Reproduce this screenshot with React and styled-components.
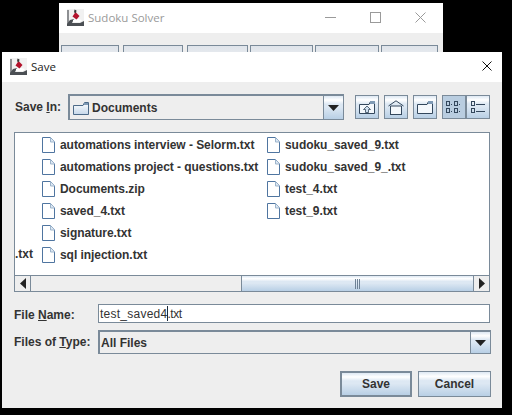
import React from "react";
import styled, { createGlobalStyle } from "styled-components";

const OCEAN = "linear-gradient(#dde8f3, #fff 18%, #dde8f3 36%, #dde8f3 48%, #b8cfe5)";
const LINE = "#7a8a99";

const GlobalStyle = createGlobalStyle`
  html, body { margin: 0; padding: 0; background: #000; }
  body { font-family: "Liberation Sans", Arial, sans-serif; }
`;

const Screen = styled.div`
  width: 512px;
  height: 415px;
  background: #000;
  overflow: hidden;
  padding-top: 3px;
  box-sizing: border-box;
`;

const BackWindow = styled.div`
  width: 384px;
  height: 49px;
  margin-left: 59px;
  background: #eee;
  overflow: hidden;
`;

const TitleBar = styled.div`
  height: 30px;
  background: #fff;
  display: flex;
  align-items: center;
  padding-left: ${(p) => p.$left}px;
  padding-bottom: 2px;
  box-sizing: border-box;
  font: 11.5px "Open Sans", sans-serif;
  color: ${(p) => (p.$dim ? "#9a9a9a" : "#1a1a1a")};
`;

const TitleText = styled.span`
  margin-left: 4px;
  flex: 1;
`;

const WinControls = styled.div`
  display: flex;
  gap: 34px;
  padding-right: 17px;
`;

const TabRow = styled.div`
  display: flex;
  padding: 12px 0 0 2px;
`;

const Tab = styled.div`
  width: ${(p) => p.$w}px;
  margin-right: ${(p) => p.$gap}px;
  height: 12px;
  box-sizing: border-box;
  border: 1px solid ${LINE};
  background: linear-gradient(#dfe4ea, #e8ebef);
`;

const FrontWindow = styled.div`
  width: 500px;
  height: 356px;
  margin-left: 2px;
  background: #eee;
`;

const CloseSlot = styled.div`
  padding-right: 10px;
  display: flex;
`;

const Panel = styled.div`
  padding: 12px 11px 0 12px;
  color: #333;
  font-size: 12px;
  font-weight: bold;
`;

const TopRow = styled.div`
  display: flex;
  align-items: center;
`;

const SaveInLabel = styled.label`
  width: 54px;
  padding-left: 1px;
  box-sizing: border-box;
`;

const Combo = styled.div`
  display: flex;
  box-sizing: border-box;
  height: ${(p) => p.$h}px;
  width: ${(p) => p.$w}px;
  border: 1px solid ${LINE};
  border-width: 2px 1px 1px 2px;
  background: #eee;
  align-items: center;
`;

const ComboValue = styled.div`
  flex: 1;
  display: flex;
  align-items: center;
  gap: 3px;
  padding-left: ${(p) => p.$left}px;
`;

const ComboArrow = styled.div`
  width: 19px;
  height: 100%;
  border-left: 1px solid ${LINE};
  background: ${OCEAN};
  display: flex;
  align-items: center;
  justify-content: center;
`;

const Tools = styled.div`
  display: flex;
  margin-left: 11px;
`;

const ToolButton = styled.div`
  width: 24px;
  height: 24px;
  box-sizing: border-box;
  border: 1px solid ${LINE};
  margin-right: ${(p) => p.$gap || 0}px;
  background: ${(p) => (p.$on ? "#b9cde0" : OCEAN)};
  display: flex;
  align-items: center;
  justify-content: center;
`;

const FileList = styled.div`
  margin: 12px 1px 0 0;
  height: 160px;
  box-sizing: border-box;
  border: 1px solid ${LINE};
  background: #fff;
  display: flex;
  flex-direction: column;
`;

const Columns = styled.div`
  flex: 1;
  display: flex;
  padding-top: 1px;
  overflow: hidden;
`;

const ClippedColumn = styled.div`
  width: 27px;
  flex: none;
  display: flex;
  flex-direction: column;
  justify-content: flex-end;
  padding: 0 9px 10px 0;
  box-sizing: border-box;
  text-align: right;
  overflow: hidden;
`;

const FileColumn = styled.div`
  width: ${(p) => p.$w}px;
  flex: none;
  display: flex;
  flex-direction: column;
`;

const FileRow = styled.div`
  height: 22px;
  display: flex;
  align-items: center;
  gap: 5px;
  white-space: nowrap;
  letter-spacing: -0.05px;
`;

const ClippedText = styled.div`
  height: 22px;
  line-height: 22px;
`;

const Scrollbar = styled.div`
  height: 16px;
  border-top: 1px solid ${LINE};
  display: flex;
  background: #eee;
  box-sizing: border-box;
`;

const ScrollButton = styled.div`
  width: 16px;
  flex: none;
  box-sizing: border-box;
  display: flex;
  align-items: center;
  justify-content: center;
  background: #eee;
  ${(p) => (p.$right ? `border-left: 1px solid ${LINE};` : `border-right: 1px solid ${LINE};`)}
`;

const ScrollTrack = styled.div`
  width: 210px;
  flex: none;
`;

const ScrollThumb = styled.div`
  flex: 1;
  background: ${OCEAN};
  border-left: 1px solid ${LINE};
  display: flex;
  align-items: center;
  justify-content: center;
`;

const FieldRow = styled.div`
  display: flex;
  align-items: center;
  margin-top: ${(p) => p.$top}px;
`;

const FieldLabel = styled.label`
  width: 84px;
  flex: none;
`;

const NameLabel = styled(FieldLabel)`
  padding-top: 2px;
`;

const TextField = styled.div`
  width: 392px;
  height: 19px;
  box-sizing: border-box;
  border: 1px solid ${LINE};
  background: #fff;
  font-weight: normal;
  line-height: 19px;
  padding-left: 1px;
  color: #333;
  letter-spacing: 0.25px;
  white-space: nowrap;
`;

const FieldTail = styled.span`
  letter-spacing: -0.5px;
`;

const Caret = styled.span`
  display: inline-block;
  width: 1px;
  height: 15px;
  margin-right: -1px;
  background: #1c2a3a;
  vertical-align: -3px;
`;

const Actions = styled.div`
  display: flex;
  justify-content: flex-end;
  gap: 6px;
  margin-top: 17px;
`;

const ActionButton = styled.div`
  width: ${(p) => p.$w}px;
  height: 26px;
  box-sizing: border-box;
  border: ${(p) => (p.$primary ? 2 : 1)}px solid ${LINE};
  background: ${OCEAN};
  display: flex;
  align-items: center;
  justify-content: center;
`;

const Mnemonic = styled.span`
  text-decoration: underline;
`;

const DukeIcon = () => (
  <svg width="17" height="17" viewBox="0 0 17 17">
    <rect x="0" y="0" width="17" height="17" fill="#f1f1f1" />
    <path d="M0 1 H2 V16 H0 Z" fill="#8d8f92" />
    <path d="M0 15 L3 11 L7 10 L5 14 L13 14 L17 12 V17 H0 Z" fill="#4b4f54" />
    <path d="M6 11 L11 10 L15 11 L13 13 L6 13 Z" fill="#fff" />
    <path d="M8.5 3 L12.5 7 L9.5 10.5 L5.5 7.5 Z" fill="#b3122c" />
    <path d="M7.5 0.5 L9.5 1.5 L9 4 L7 3.5 Z" fill="#3a3a3a" />
  </svg>
);

const X = ({ size, color, width = 1 }) => (
  <svg width={size} height={size} viewBox={`0 0 ${size} ${size}`}>
    <path d={`M0.5 0.5 L${size - 0.5} ${size - 0.5} M${size - 0.5} 0.5 L0.5 ${size - 0.5}`} stroke={color} strokeWidth={width} fill="none" />
  </svg>
);

const Minimize = () => (
  <svg width="11" height="11" viewBox="0 0 11 11">
    <path d="M0 5.5 H11" stroke="#9a9a9a" />
  </svg>
);

const Maximize = () => (
  <svg width="11" height="11" viewBox="0 0 11 11">
    <rect x="0.5" y="0.5" width="10" height="10" fill="none" stroke="#9a9a9a" />
  </svg>
);

const FolderIcon = () => (
  <svg width="16" height="14" viewBox="0 0 16 14">
    <defs>
      <linearGradient id="folderFill" x1="0" y1="0" x2="0" y2="1">
        <stop offset="0" stopColor="#fff" />
        <stop offset="1" stopColor="#c6d8ea" />
      </linearGradient>
    </defs>
    <path d="M0.5 4.5 L10 4.5 L11.5 1.5 L15.5 1.5 L15.5 13.5 L0.5 13.5 Z" fill="url(#folderFill)" stroke="#4c6a88" />
    <path d="M11 2 H15 V4 H11 Z" fill="#7f9ab5" />
  </svg>
);

const ToolFolder = ({ up }) => (
  <svg width="16" height="14" viewBox="0 0 16 14">
    <path d="M0.5 4.5 L10 4.5 L11.5 1.5 L15.5 1.5 L15.5 13.5 L0.5 13.5 Z" fill="#f4f8fc" stroke="#33475c" />
    <path d="M11 1 H16 V4 H11 Z" fill="#7f9ab5" />
    {up && <path d="M8 6 L4.5 9.5 H6.5 V12.5 H9.5 V9.5 H11.5 Z" fill="#cfe0f0" stroke="#33475c" strokeWidth="0.8" />}
  </svg>
);

const HomeIcon = () => (
  <svg width="16" height="15" viewBox="0 0 16 15">
    <path d="M0.5 6 L8 0.8 L15.5 6" fill="none" stroke="#33475c" />
    <path d="M2.5 6 H13.5 V14.5 H2.5 Z" fill="#f4f8fc" stroke="#33475c" />
    <path d="M2 14.5 H14" stroke="#33475c" />
  </svg>
);

const GridIcon = () => (
  <svg width="16" height="14" viewBox="0 0 16 14" fill="none" stroke="#33475c">
    <rect x="0.5" y="1.5" width="3" height="4" />
    <rect x="8.5" y="1.5" width="3" height="4" />
    <rect x="0.5" y="8.5" width="3" height="4" />
    <rect x="8.5" y="8.5" width="3" height="4" />
    <path d="M5 4.5 H6 M13 4.5 H14 M5 11.5 H6 M13 11.5 H14" />
  </svg>
);

const DetailsIcon = () => (
  <svg width="15" height="14" viewBox="0 0 15 14" fill="none" stroke="#33475c">
    <rect x="0.5" y="1.5" width="3" height="4" />
    <rect x="0.5" y="8.5" width="3" height="4" />
    <path d="M5 4.5 H14 M5 11.5 H14" />
  </svg>
);

const FileIcon = () => (
  <svg width="13" height="16" viewBox="0 0 13 16">
    <path d="M0.5 0.5 H8.5 L12.5 5 V15.5 H0.5 Z" fill="#fff" stroke="#4f75a0" />
    <path d="M8.5 0.5 V5 H12.5" fill="#dde8f3" stroke="#9db5cc" />
  </svg>
);

const Triangle = ({ dir }) => {
  const d = { down: "M0 0 H11 L5.5 6 Z", left: "M6 0 V11 L0 5.5 Z", right: "M0 0 V11 L6 5.5 Z" }[dir];
  const w = dir === "down" ? 11 : 6;
  const h = dir === "down" ? 6 : 11;
  return (
    <svg width={w} height={h} viewBox={`0 0 ${w} ${h}`}>
      <path d={d} fill="#222" />
    </svg>
  );
};

const Grip = () => (
  <svg width="6" height="10" viewBox="0 0 6 10">
    <path d="M0.5 0 V10 M2.5 0 V10 M4.5 0 V10" stroke="#6e8296" />
  </svg>
);

const TABS = [
  [58, 4],
  [60, 4],
  [61, 2],
  [63, 2],
  [64, 2],
  [57, 0],
];

const FIRST_FILES = [
  "automations interview - Selorm.txt",
  "automations project - questions.txt",
  "Documents.zip",
  "saved_4.txt",
  "signature.txt",
  "sql injection.txt",
];

const SECOND_FILES = ["sudoku_saved_9.txt", "sudoku_saved_9_.txt", "test_4.txt", "test_9.txt"];

export default function App() {
  return (
    <Screen>
      <GlobalStyle />
      <BackWindow>
        <TitleBar $left={8} $dim>
          <DukeIcon />
          <TitleText>Sudoku Solver</TitleText>
          <WinControls>
            <Minimize />
            <Maximize />
            <X size={11} color="#9a9a9a" />
          </WinControls>
        </TitleBar>
        <TabRow>
          {TABS.map(([w, gap], i) => (
            <Tab key={i} $w={w} $gap={gap} />
          ))}
        </TabRow>
      </BackWindow>

      <FrontWindow>
        <TitleBar $left={8}>
          <DukeIcon />
          <TitleText>Save</TitleText>
          <CloseSlot>
            <X size={10} color="#111" />
          </CloseSlot>
        </TitleBar>
        <Panel>
          <TopRow>
            <SaveInLabel>
              Save <Mnemonic>I</Mnemonic>n:
            </SaveInLabel>
            <Combo $w={276} $h={26}>
              <ComboValue $left={3}>
                <FolderIcon />
                Documents
              </ComboValue>
              <ComboArrow>
                <Triangle dir="down" />
              </ComboArrow>
            </Combo>
            <Tools>
              <ToolButton $gap={5}>
                <ToolFolder up />
              </ToolButton>
              <ToolButton $gap={5}>
                <HomeIcon />
              </ToolButton>
              <ToolButton $gap={5}>
                <ToolFolder />
              </ToolButton>
              <ToolButton $on>
                <GridIcon />
              </ToolButton>
              <ToolButton>
                <DetailsIcon />
              </ToolButton>
            </Tools>
          </TopRow>

          <FileList>
            <Columns>
              <ClippedColumn>
                <ClippedText>.txt</ClippedText>
              </ClippedColumn>
              <FileColumn $w={225}>
                {FIRST_FILES.map((name) => (
                  <FileRow key={name}>
                    <FileIcon />
                    {name}
                  </FileRow>
                ))}
              </FileColumn>
              <FileColumn $w={200}>
                {SECOND_FILES.map((name) => (
                  <FileRow key={name}>
                    <FileIcon />
                    {name}
                  </FileRow>
                ))}
              </FileColumn>
            </Columns>
            <Scrollbar>
              <ScrollButton>
                <Triangle dir="left" />
              </ScrollButton>
              <ScrollTrack />
              <ScrollThumb>
                <Grip />
              </ScrollThumb>
              <ScrollButton $right>
                <Triangle dir="right" />
              </ScrollButton>
            </Scrollbar>
          </FileList>

          <FieldRow $top={12}>
            <NameLabel>
              File <Mnemonic>N</Mnemonic>ame:
            </NameLabel>
            <TextField>
              test_saved4
              <Caret />
              <FieldTail>.txt</FieldTail>
            </TextField>
          </FieldRow>
          <FieldRow $top={7}>
            <FieldLabel>
              Files of <Mnemonic>T</Mnemonic>ype:
            </FieldLabel>
            <Combo $w={393} $h={24}>
              <ComboValue $left={1}>All Files</ComboValue>
              <ComboArrow>
                <Triangle dir="down" />
              </ComboArrow>
            </Combo>
          </FieldRow>

          <Actions>
            <ActionButton $primary $w={72}>
              Save
            </ActionButton>
            <ActionButton $w={73}>Cancel</ActionButton>
          </Actions>
        </Panel>
      </FrontWindow>
    </Screen>
  );
}
